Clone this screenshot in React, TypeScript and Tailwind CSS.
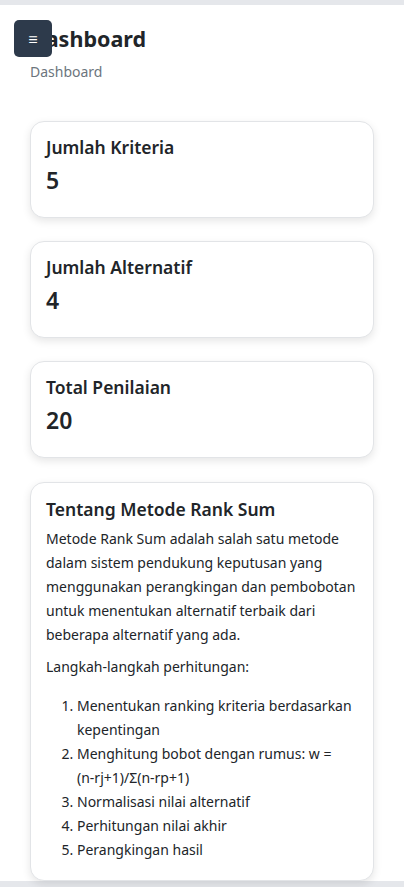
import React from "react";

const stats = [
  { label: "Jumlah Kriteria", value: 5 },
  { label: "Jumlah Alternatif", value: 4 },
  { label: "Total Penilaian", value: 20 },
];

const steps: React.ReactNode[] = [
  "Menentukan ranking kriteria berdasarkan kepentingan",
  <>
    Menghitung bobot dengan rumus: w = <span className="whitespace-nowrap">(n-rj+1)/Σ(n-rp+1)</span>
  </>,
  "Normalisasi nilai alternatif",
  "Perhitungan nilai akhir",
  "Perangkingan hasil",
];

export default function App() {
  return (
    <div
      className="min-h-screen bg-[#e5e7eb] pt-[5px] pb-[6px] text-[#212529]"
      style={{ fontFamily: '"Noto Sans", "Open Sans", sans-serif' }}
    >
      <div className="relative bg-white px-[30px] pt-[18px] pb-0">
        {/* sidebar toggle overlays the title */}
        <button className="absolute left-[14px] top-[15px] flex h-[37px] w-[38px] items-center justify-center rounded-[5px] bg-[#2d3a4b] text-[16px] font-bold leading-none text-white">
          ≡
        </button>

        <header>
          <h1 className="text-[21.5px] font-bold leading-[32px] text-[#212529]">Dashboard</h1>
          <p className="mt-[7px] text-[14px] leading-[20px] text-[#6c757d]">Dashboard</p>
        </header>

        <div className="mt-[39px] flex flex-col gap-[23px]">
          {stats.map((s) => (
            <div
              key={s.label}
              className="rounded-[14px] border border-[#e2e4e7] bg-white px-[15px] pt-[11px] pb-[21px] shadow-[0_3px_8px_rgba(0,0,0,0.10)]"
            >
              <h3 className="text-[17.5px] font-semibold leading-[28px]">{s.label}</h3>
              <div className="mt-[3px] text-[23px] font-semibold leading-[32px]">{s.value}</div>
            </div>
          ))}

          <div className="mt-[1px] rounded-[14px] border border-[#e2e4e7] bg-white px-[15px] pt-[13px] pb-[18px] shadow-[0_3px_8px_rgba(0,0,0,0.10)]">
            <h3 className="text-[17.5px] font-semibold leading-[26px]">Tentang Metode Rank Sum</h3>
            <p className="mt-[5px] text-[14px] leading-[24px]">
              Metode Rank Sum adalah salah satu metode dalam sistem pendukung keputusan yang
              menggunakan perangkingan dan pembobotan untuk menentukan alternatif terbaik dari
              beberapa alternatif yang ada.
            </p>
            <p className="mt-[8px] text-[14px] leading-[24px]">Langkah-langkah perhitungan:</p>
            <ol className="mt-[15px] list-decimal pl-[31px] text-[14px] leading-[24px]">
              {steps.map((st, i) => (
                <li key={i}>{st}</li>
              ))}
            </ol>
          </div>
        </div>
      </div>
    </div>
  );
}
